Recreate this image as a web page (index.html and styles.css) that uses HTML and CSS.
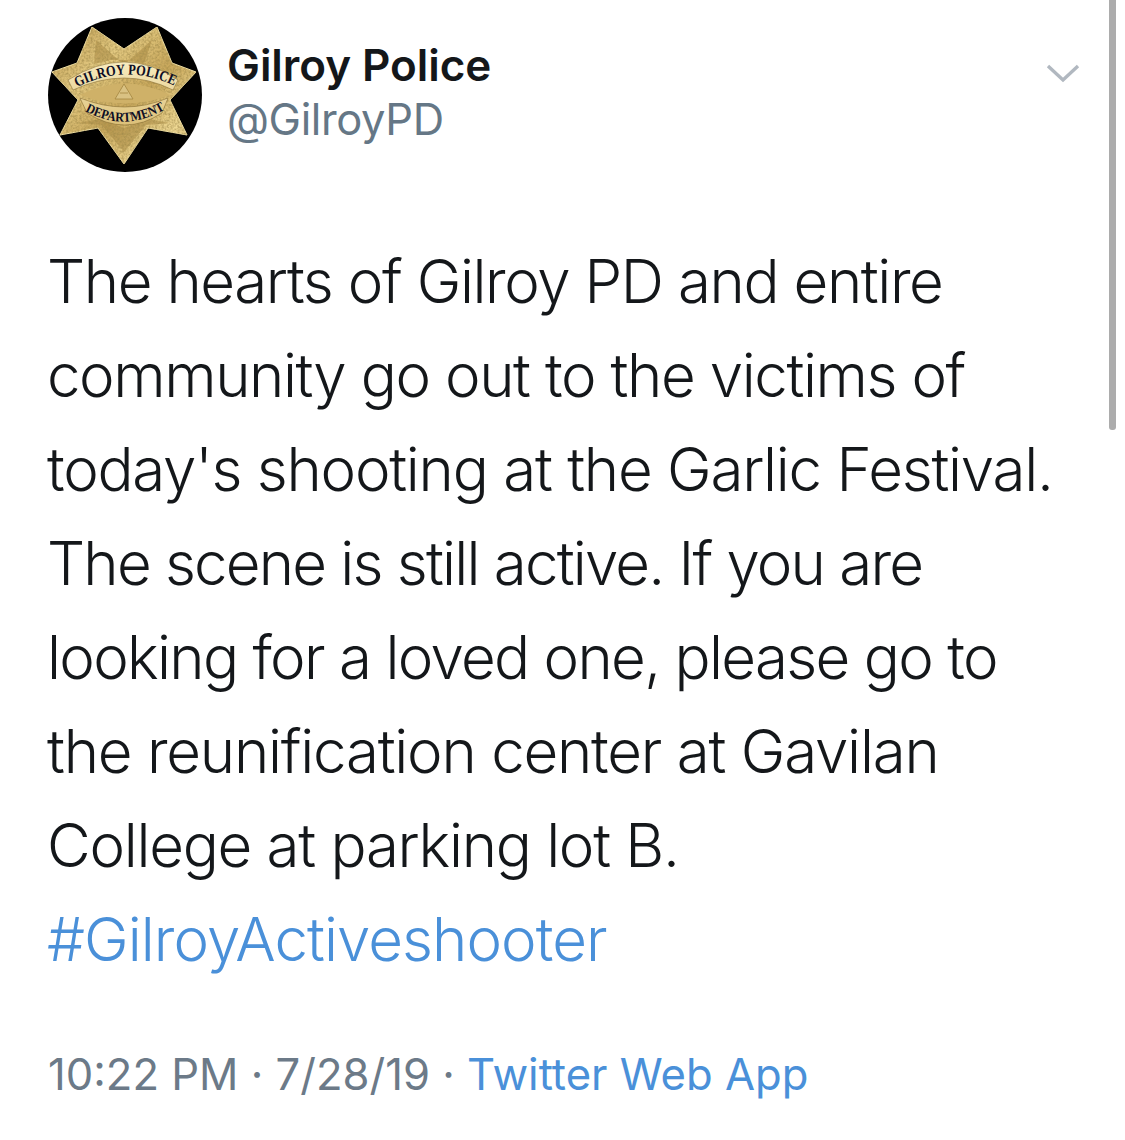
FILE: index.html
```html
<!DOCTYPE html>
<html lang="en">
<head>
<meta charset="utf-8">
<title>Gilroy Police tweet</title>
<link rel="stylesheet" href="styles.css">
</head>
<body>
<main class="tweet">
  <header class="head">
    <svg class="avatar" width="154" height="154" viewBox="48 18 154 154" role="img" aria-label="Gilroy Police Department badge">
      <defs>
        <linearGradient id="gold" x1="0" y1="0" x2="1" y2="1">
          <stop offset="0" stop-color="#b8954c"/>
          <stop offset=".3" stop-color="#e4ca82"/>
          <stop offset=".55" stop-color="#c9a85c"/>
          <stop offset=".8" stop-color="#efd994"/>
          <stop offset="1" stop-color="#a8843c"/>
        </linearGradient>
        <linearGradient id="ribbon" x1="0" y1="0" x2="0" y2="1">
          <stop offset="0" stop-color="#f8ecc0"/>
          <stop offset="1" stop-color="#dcc078"/>
        </linearGradient>
        <filter id="grain" x="0" y="0" width="100%" height="100%">
          <feTurbulence type="fractalNoise" baseFrequency=".45" numOctaves="2" seed="4"/>
          <feColorMatrix values="0 0 0 0 .36  0 0 0 0 .26  0 0 0 0 .07  1.6 0 0 0 -.55"/>
          <feComposite in2="SourceAlpha" operator="in"/>
          <feMerge><feMergeNode in="SourceGraphic"/><feMergeNode/></feMerge>
        </filter>
        <path id="arcTop" d="M74 89Q125 61 177 87"/>
        <path id="arcBottom" d="M83 110Q125 134 167 108"/>
      </defs>
      <circle cx="125" cy="95" r="77" fill="#000"/>
      <g filter="url(#grain)">
        <polygon fill="url(#gold)" stroke="#f4e4a8" stroke-width="1" points="92,27 124,49 157,27 172,63 196,72 170,100 187,135 148,128 124,164 98,128 60,135 78,100 52,72 77,63"/>
        <path fill="#a98a45" opacity=".55" d="M96 40l25 22h6l25-22-8 24-17-4h-16l-17 4zM78 123l22-4 24 9 24-9 22 4-24 2-22 27-22-27z"/>
      </g>
      <path fill="url(#ribbon)" stroke="#7a6029" stroke-width=".5" d="M68 80Q125 44 178 80L173 90Q125 66 73 90zM80 98Q125 116 168 98L162 113Q125 137 87 113z"/>
      <path fill="#cfb168" d="M80 95Q125 72 170 95Q125 112 80 95z"/>
      <path fill="#d9c283" stroke="#a3853f" stroke-width=".8" d="M124 84l-9 15h18z"/>
      <path fill="none" stroke="#a3853f" stroke-width=".8" d="M120 93h8"/>
      <text class="badge-text"><textPath href="#arcTop" startOffset="50%" text-anchor="middle" textLength="101" lengthAdjust="spacingAndGlyphs">GILROY POLICE</textPath></text>
      <text class="badge-text badge-small"><textPath href="#arcBottom" startOffset="50%" text-anchor="middle" textLength="84" lengthAdjust="spacingAndGlyphs">DEPARTMENT</textPath></text>
    </svg>
    <div class="names">
      <div class="name">Gilroy Police</div>
      <div class="handle">@GilroyPD</div>
    </div>
    <svg class="chevron" width="36" height="20" viewBox="0 0 36 20" aria-hidden="true">
      <path d="M4 3L19 17L34 3" fill="none" stroke="#b1b8c0" stroke-width="3.4"/>
    </svg>
  </header>
  <p class="body">
    <span class="line l1">The hearts of Gilroy PD and entire</span>
    <span class="line l2">community go out to the victims of</span>
    <span class="line l3">today's shooting at the Garlic Festival.</span>
    <span class="line l4">The scene is still active. If you are</span>
    <span class="line l5">looking for a loved one, please go to</span>
    <span class="line l6">the reunification center at Gavilan</span>
    <span class="line l7">College at parking lot B.</span>
    <span class="line l8 link">#GilroyActiveshooter</span>
  </p>
  <footer class="meta">10:22 PM · 7/28/19 · <span class="source">Twitter Web App</span></footer>
</main>
<div class="scrollbar"></div>
</body>
</html>
```
FILE: styles.css
```css
html, body {
  margin: 0;
  padding: 0;
  background: #fff;
}
body {
  width: 1125px;
  height: 1140px;
  overflow: hidden;
  position: relative;
  font-family: "Inter", "Liberation Sans", sans-serif;
}
.tweet {
  padding: 18px 45px 0 48px;
}
.head {
  display: flex;
  align-items: flex-start;
}
.avatar {
  flex: none;
}
.names {
  margin-left: 25px;
  padding-top: 20px;
  flex: 1;
}
.name {
  font-size: 44px;
  line-height: 54px;
  font-weight: 600;
  color: #14171a;
  letter-spacing: -0.05px;
}
.handle {
  font-size: 43.5px;
  line-height: 54px;
  font-weight: 400;
  color: #657786;
  letter-spacing: -0.4px;
}
.chevron {
  flex: none;
  margin-top: 45px;
}
.body {
  margin: 62px 0 0;
  font-size: 60px;
  font-weight: 300;
  line-height: 94px;
  color: #14171a;
}
.line {
  display: block;
  white-space: nowrap;
  margin-left: -1px;
}
.l1, .l2 { letter-spacing: -1.42px; }
.l3 { letter-spacing: -1.25px; }
.l4 { letter-spacing: -1.8px; }
.l5 { letter-spacing: -1.7px; }
.l6 { letter-spacing: -1.23px; }
.l7 { letter-spacing: -1.28px; }
.l8 { letter-spacing: -0.95px; }
.link, .source {
  color: #4a90d9;
}
.meta {
  margin-top: 62px;
  font-size: 43.6px;
  line-height: 54px;
  color: #6c7a88;
  white-space: nowrap;
}
.scrollbar {
  position: absolute;
  top: 0;
  left: 1109px;
  width: 7px;
  height: 430px;
  background: #acacac;
  border-radius: 0 0 3px 3px;
}
.badge-text {
  font-family: "Liberation Serif", serif;
  font-size: 15px;
  font-weight: 700;
  fill: #0e0e24;
}
.badge-small {
  font-size: 13.5px;
}
```
